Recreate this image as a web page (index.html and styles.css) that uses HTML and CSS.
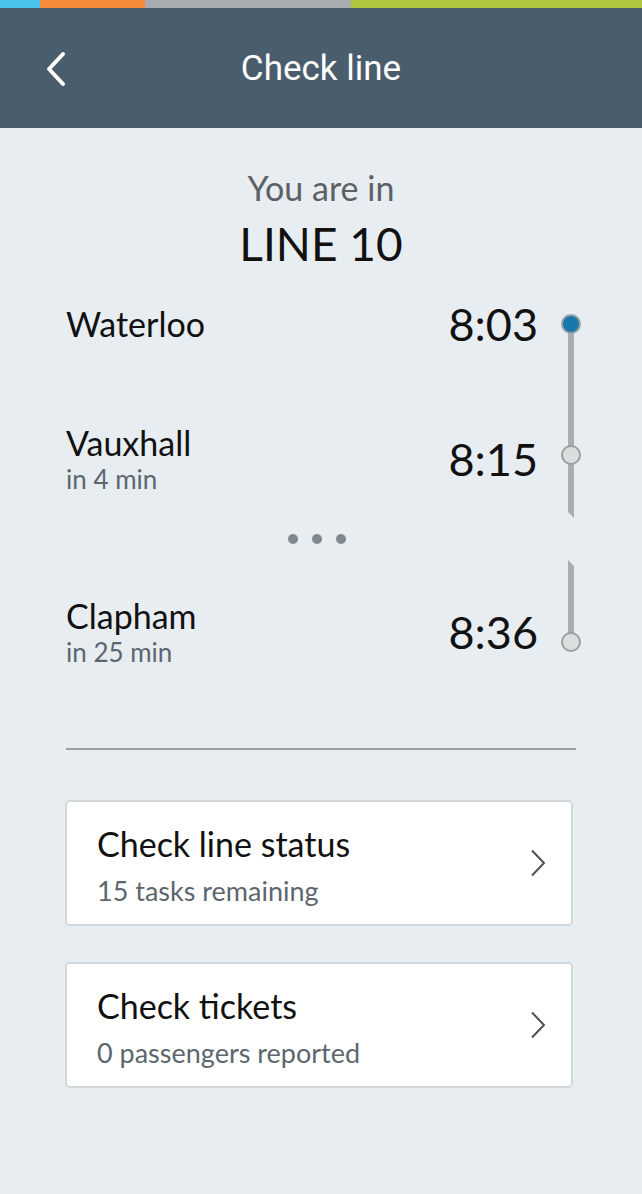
FILE: index.html
```html
<!DOCTYPE html>
<html lang="en">
<head>
<meta charset="utf-8">
<title>Check line</title>
<link rel="stylesheet" href="styles.css">
</head>
<body>
<div class="stripes">
  <span class="stripe s-cyan"></span>
  <span class="stripe s-orange"></span>
  <span class="stripe s-gray"></span>
  <span class="stripe s-green"></span>
</div>
<header class="topbar">
  <div class="back">
    <svg width="24" height="36" viewBox="0 0 24 36" aria-hidden="true">
      <polyline points="19,3 5,18 19,33" fill="none" stroke="#fff" stroke-width="4" stroke-linecap="round" stroke-linejoin="round"/>
    </svg>
  </div>
  <h1 class="title">Check line</h1>
  <div></div>
</header>

<main class="content">
  <div class="intro">
    <div class="intro-label">You are in</div>
    <div class="intro-line">LINE 10</div>
  </div>

  <div class="stops">
    <div class="stop">
      <div class="info"><div class="name">Waterloo</div></div>
      <div class="time">8:03</div>
      <div class="node node-first"><span class="dot dot-current"></span></div>
    </div>
    <div class="link link-1"><span class="rail"></span></div>
    <div class="stop">
      <div class="info"><div class="name">Vauxhall</div><div class="eta">in 4 min</div></div>
      <div class="time">8:15</div>
      <div class="node"><span class="dot dot-up"></span></div>
    </div>
    <div class="link link-2"><span class="rail rail-cut-end"></span></div>
    <div class="more"><span></span><span></span><span></span></div>
    <div class="link link-3"><span class="rail rail-cut-start"></span></div>
    <div class="stop">
      <div class="info"><div class="name">Clapham</div><div class="eta">in 25 min</div></div>
      <div class="time">8:36</div>
      <div class="node node-last"><span class="dot dot-down"></span></div>
    </div>
  </div>

  <hr class="divider">

  <div class="cards">
    <a class="card" href="#">
      <div class="card-text">
        <div class="card-title">Check line status</div>
        <div class="card-sub">15 tasks remaining</div>
      </div>
      <svg class="chev" width="16" height="28" viewBox="0 0 16 28" aria-hidden="true">
        <polyline points="2,1.5 14,14 2,26.5" fill="none" stroke="#4b5157" stroke-width="2"/>
      </svg>
    </a>
    <a class="card" href="#">
      <div class="card-text">
        <div class="card-title">Check tickets</div>
        <div class="card-sub">0 passengers reported</div>
      </div>
      <svg class="chev" width="16" height="28" viewBox="0 0 16 28" aria-hidden="true">
        <polyline points="2,1.5 14,14 2,26.5" fill="none" stroke="#4b5157" stroke-width="2"/>
      </svg>
    </a>
  </div>
</main>
</body>
</html>
```

FILE: styles.css
```css
* { box-sizing: border-box; }

html, body {
  margin: 0;
  padding: 0;
}

body {
  background: #e8edf1;
  font-family: Lato, "Open Sans", sans-serif;
  color: #111;
  width: 642px;
  min-height: 1194px;
}

.stripes {
  display: flex;
  height: 8px;
}
.stripe { display: block; height: 100%; }
.s-cyan { width: 40px; background: #4cc3ec; }
.s-orange { width: 105px; background: #f68c3a; }
.s-gray { width: 206px; background: #a7adb1; }
.s-green { flex: 1; background: #aec640; }

.topbar {
  height: 120px;
  background: #495d6c;
  display: grid;
  grid-template-columns: 1fr auto 1fr;
  align-items: center;
}
.back {
  padding-left: 44px;
  display: flex;
  align-items: center;
  padding-top: 2px;
}
.title {
  margin: 0;
  font-family: Roboto, "Liberation Sans", sans-serif;
  font-weight: 400;
  font-size: 35px;
  color: #fff;
  line-height: 41px;
}

.content {
  padding: 0 66px;
}

.intro {
  text-align: center;
  padding-top: 40px;
}
.intro-label {
  font-size: 34px;
  line-height: 40px;
  color: #5b6166;
}
.intro-line {
  font-size: 46px;
  line-height: 56px;
  margin-top: 8px;
  color: #111;
}

.stops {
  margin-top: 27px;
  margin-right: -5px;
}

.stop,
.link {
  display: grid;
  grid-template-columns: 1fr auto 20px;
  column-gap: 23px;
  align-items: center;
}

.name {
  font-size: 34px;
  line-height: 38px;
}
.eta {
  margin-top: 3px;
  font-size: 26px;
  line-height: 28px;
  color: #5d666e;
}
.time {
  grid-column: 2;
  font-size: 45px;
  line-height: 50px;
  text-align: right;
}

.node {
  grid-column: 3;
  align-self: stretch;
  display: flex;
  flex-direction: column;
  align-items: center;
  justify-content: center;
  background: linear-gradient(#a9aeb3, #a9aeb3) center top / 6px 100% no-repeat;
}
.node-first {
  background-position: center bottom;
  background-size: 6px 50%;
}
.node-last {
  background-size: 6px calc(50% + 10px);
}

.dot {
  display: block;
  width: 20px;
  height: 20px;
  border-radius: 50%;
  border: 2px solid #9b9fa3;
  background: #dcdddd;
}
.dot-current { background: #1778ad; }
.dot-up { margin-bottom: 8px; }
.dot-down { margin-top: 21px; }

.link .rail {
  grid-column: 3;
  justify-self: center;
  display: block;
  width: 6px;
  height: 100%;
  background: #a9aeb3;
}
.link-1 { height: 75px; }
.link-2 { height: 25px; }
.link-3 { height: 37px; }
.rail-cut-end { clip-path: polygon(0 0, 100% 0, 100% 100%, 0 calc(100% - 6px)); }
.rail-cut-start { clip-path: polygon(0 0, 100% 6px, 100% 100%, 0 100%); }

.more {
  height: 42px;
  display: flex;
  align-items: center;
  gap: 14px;
  padding-left: 222px;
}
.more span {
  display: block;
  width: 10px;
  height: 10px;
  border-radius: 50%;
  background: #80878e;
}

.divider {
  margin: 82px 0 0;
  border: 0;
  height: 2px;
  background: #9a9fa4;
}

.cards {
  margin: 50px 3px 0 -1px;
  display: flex;
  flex-direction: column;
  gap: 36px;
}
.card {
  display: flex;
  align-items: center;
  justify-content: space-between;
  height: 126px;
  background: #fff;
  border: 2px solid #d3d8dc;
  border-radius: 5px;
  padding: 0 25px 0 30px;
  text-decoration: none;
  color: #111;
}
.card-text {
  padding-top: 4px;
}
.card-title {
  font-size: 34px;
  line-height: 40px;
}
.card-sub {
  margin-top: 11px;
  font-size: 27px;
  line-height: 32px;
  color: #5d666e;
}
.chev { display: block; }
```
